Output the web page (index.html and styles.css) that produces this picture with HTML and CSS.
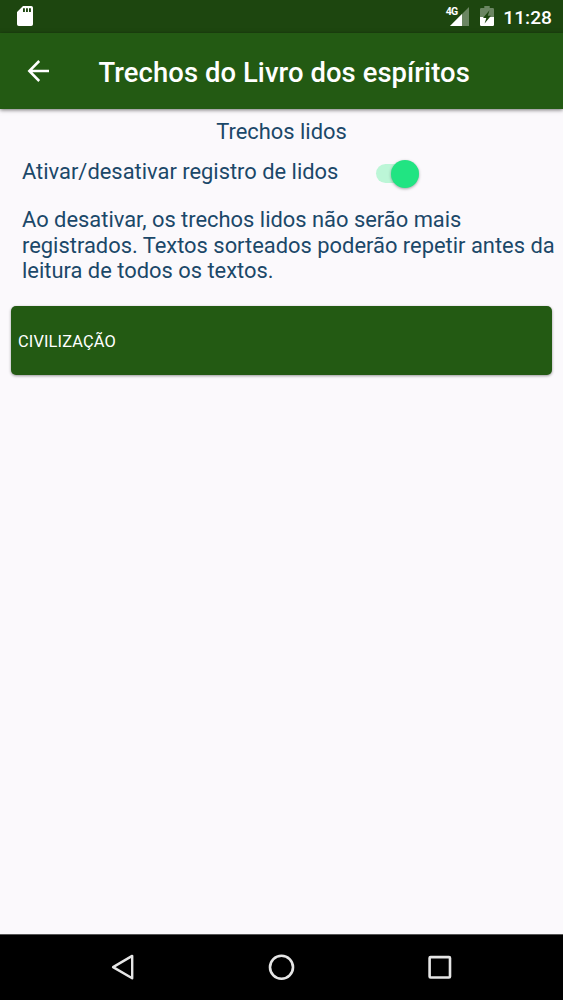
FILE: index.html
```html
<!DOCTYPE html>
<html lang="pt-BR">
<head>
<meta charset="utf-8">
<title>Trechos do Livro dos espíritos</title>
<link rel="stylesheet" href="styles.css">
</head>
<body>
<div class="screen">
  <header class="status">
    <svg class="sd" width="16" height="20" viewBox="0 0 16 20"><path fill="#fff" fill-rule="evenodd" d="M6 0H14.2Q16 0 16 1.8V18.2Q16 20 14.2 20H1.8Q0 20 0 18.2V6ZM6 2.2V6H7.9V2.2ZM9 2.2V6H10.9V2.2ZM12 2.2V6H13.9V2.2Z"/></svg>
    <div class="signal">
      <span class="network">4G</span>
      <svg width="19" height="19" viewBox="0 0 19 19"><path fill="#fff" fill-opacity=".35" d="M19 0V19H0Z"/><path fill="#fff" d="M12 7V19H0Z"/></svg>
    </div>
    <svg class="battery" width="14" height="20" viewBox="0 0 14 20"><path fill="#fff" fill-opacity=".35" d="M4.3 0H9.7V2H12.8Q14 2 14 3.2V11H0V3.2Q0 2 1.2 2H4.3Z"/><path fill="#fff" d="M0 11H14V18.8Q14 20 12.8 20H1.2Q0 20 0 18.8Z"/><path fill="#1d460f" d="M9.5 4.2 3 12H6.3L4.6 17.5 11 9.8H7.8Z"/></svg>
    <span class="clock">11:28</span>
  </header>
  <div class="appbar">
    <svg class="back" width="22" height="22" viewBox="0 0 22 22"><path fill="none" stroke="#fff" stroke-width="2.5" d="M22 11H2.6M12.2 1 2.3 11 12.2 21"/></svg>
    <h1 class="title">Trechos do Livro dos espíritos</h1>
  </div>
  <main class="content">
    <h2 class="heading">Trechos lidos</h2>
    <div class="setting">
      <span>Ativar/desativar registro de lidos</span>
      <div class="switch"><div class="thumb"></div></div>
    </div>
    <p class="note">Ao desativar, os trechos lidos não serão mais<br>registrados. Textos sorteados poderão repetir antes da<br>leitura de todos os textos.</p>
    <button class="item">CIVILIZAÇÃO</button>
  </main>
  <nav class="navbar">
    <svg width="28" height="28" viewBox="0 0 28 28"><path fill="none" stroke="#e6e6e6" stroke-width="2.4" stroke-linejoin="round" d="M23.2 2.9V25.3L4.1 14.1Z"/></svg>
    <svg width="28" height="28" viewBox="0 0 28 28"><circle cx="14.5" cy="14.3" r="11.5" fill="none" stroke="#e6e6e6" stroke-width="2.6"/></svg>
    <svg width="28" height="28" viewBox="0 0 28 28"><rect x="4.6" y="4.1" width="20.4" height="20.4" rx="1" fill="none" stroke="#e6e6e6" stroke-width="2.6"/></svg>
  </nav>
</div>
</body>
</html>
```
FILE: styles.css
```css
* { box-sizing: border-box; }
body { margin: 0; font-family: Roboto, sans-serif; }
svg { display: block; flex: none; }
.screen { width: 563px; height: 1000px; display: flex; flex-direction: column; background: #fbf9fc; overflow: hidden; }
.status { height: 33px; flex: none; display: flex; align-items: flex-start; padding: 6px 11px 0 17px; background: #1d460f; color: #fff; }
.signal { display: flex; margin-left: auto; }
.signal svg { margin-left: -7px; margin-top: 1px; }
.network { font-size: 10.5px; line-height: 12px; font-weight: 700; letter-spacing: -.8px; }
.battery { margin-left: 11px; }
.clock { margin-left: 9px; font-size: 19.2px; line-height: 23px; font-weight: 500; }
.appbar { height: 76px; flex: none; display: flex; align-items: center; padding-left: 27px; background: #235a13; color: #fff; box-shadow: 0 1px 4px rgba(0,0,0,.55); }
.title { margin: 3px 0 0 49.5px; font-size: 27.4px; line-height: 32px; font-weight: 500; letter-spacing: .08px; white-space: nowrap; }
.content { flex: 1; display: flex; flex-direction: column; padding: 10px 0 0; color: #1b4869; font-size: 21.9px; line-height: 25.6px; }
.heading { margin: 0; font-size: inherit; font-weight: 400; text-align: center; }
.setting { display: flex; align-items: flex-start; height: 48px; margin-top: 14.6px; padding-left: 22px; white-space: nowrap; }
.switch { width: 43px; height: 19px; margin: 5.3px 0 0 38px; border-radius: 10px; background: #bcf6d7; display: flex; justify-content: flex-end; align-items: center; }
.thumb { width: 28px; height: 28px; flex: none; border-radius: 50%; background: #21e482; box-shadow: 0 1px 3px rgba(0,0,0,.35); }
.note { margin: 0 0 0 22px; white-space: nowrap; }
.item { height: 69px; margin: 22px 11px 0; padding: 3px 7px 0; border: 0; border-radius: 5px; background: #235a13; color: #fff; font: 400 16.4px/20px Roboto, sans-serif; letter-spacing: .15px; text-align: left; box-shadow: 0 1px 3px rgba(0,0,0,.4); }
.navbar { height: 66px; flex: none; display: flex; justify-content: center; align-items: center; gap: 130px; padding: 0 1px 2px 0; border-top: 1px solid #555; background: #000; }
```
